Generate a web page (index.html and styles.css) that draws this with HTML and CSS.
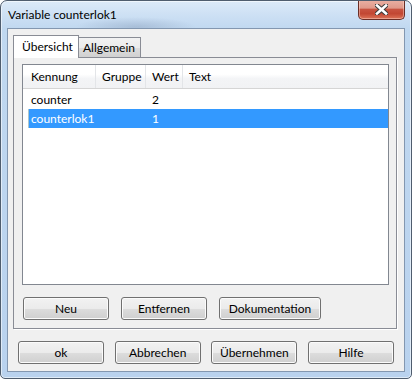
FILE: index.html
```html
<!DOCTYPE html>
<html lang="de">
<head>
<meta charset="utf-8">
<title>Variable counterlok1</title>
<link rel="stylesheet" href="styles.css">
</head>
<body>
<div class="window">
  <div class="titlebar">
    <span class="title">Variable counterlok1</span>
    <div class="close">
      <svg width="13" height="11" viewBox="0 0 13 11">
        <path d="M2 1.5 L11 9.5 M11 1.5 L2 9.5" stroke="#3b3b3b" stroke-width="4.6" stroke-linecap="square" fill="none"/>
        <path d="M2 1.5 L11 9.5 M11 1.5 L2 9.5" stroke="#ffffff" stroke-width="2.6" stroke-linecap="square" fill="none"/>
      </svg>
    </div>
  </div>
  <div class="client">
    <div class="tabs">
      <div class="tab active">Übersicht</div>
      <div class="tab">Allgemein</div>
    </div>
    <div class="panel">
      <div class="list">
        <div class="list-header">
          <div class="hcell">Kennung</div>
          <div class="hcell">Gruppe</div>
          <div class="hcell">Wert</div>
          <div class="hcell last">Text</div>
        </div>
        <div class="list-body">
          <div class="row">
            <div class="cell first">counter</div>
            <div class="cell"></div>
            <div class="cell">2</div>
            <div class="cell"></div>
          </div>
          <div class="row selected">
            <div class="cell first">counterlok1</div>
            <div class="cell"></div>
            <div class="cell">1</div>
            <div class="cell"></div>
          </div>
        </div>
      </div>
      <div class="panel-buttons">
        <button class="btn">Neu</button>
        <button class="btn">Entfernen</button>
        <button class="btn wide">Dokumentation</button>
      </div>
    </div>
    <div class="dialog-buttons">
      <button class="btn">ok</button>
      <button class="btn">Abbrechen</button>
      <button class="btn">Übernehmen</button>
      <button class="btn">Hilfe</button>
    </div>
  </div>
</div>
</body>
</html>
```

FILE: styles.css
```css
html, body {
  margin: 0;
  padding: 0;
  background: #ffffff;
}

body {
  font-family: "Lato", "Open Sans", sans-serif;
  font-size: 12px;
  color: #000000;
}

.window {
  box-sizing: border-box;
  width: 412px;
  height: 379px;
  border: 1px solid #4f5d6e;
  border-radius: 7px 7px 5px 5px;
  padding: 0 6px 6px 6px;
  display: flex;
  flex-direction: column;
  background:
    radial-gradient(ellipse 60px 10px at 135px 26px, rgba(120, 140, 170, 0.35), rgba(120, 140, 170, 0)),
    linear-gradient(180deg, #dceaf8 0px, #cde0f4 14px, #c0d8f0 28px, #b9d2ee 100%);
  box-shadow: inset 0 0 0 1px rgba(255, 255, 255, 0.55);
  overflow: hidden;
}

.titlebar {
  height: 27px;
  display: flex;
  align-items: flex-start;
  flex: 0 0 auto;
}

.title {
  margin-top: 6px;
  padding-left: 1px;
  line-height: 16px;
  color: #000000;
}

.close {
  margin-left: auto;
  margin-top: -1px;
  box-sizing: border-box;
  width: 47px;
  height: 20px;
  border: 1px solid #6a2e26;
  border-top: none;
  border-radius: 0 0 5px 5px;
  background: linear-gradient(180deg, #eab1a4 0%, #e0998a 42%, #c85340 50%, #c24733 72%, #dd7458 100%);
  box-shadow: inset 0 0 0 1px rgba(255, 220, 210, 0.45);
  display: flex;
  align-items: center;
  justify-content: center;
}

.close svg {
  display: block;
}

.client {
  flex: 1 1 auto;
  border: 1px solid #8397b0;
  background: #f0f0f0;
  display: flex;
  flex-direction: column;
}

.tabs {
  display: flex;
  align-items: flex-end;
  height: 23px;
  margin: 6px 0 -1px 5px;
}

.tab {
  box-sizing: border-box;
  height: 21px;
  width: 62px;
  border: 1px solid #898c95;
  border-left: none;
  border-bottom: none;
  background: linear-gradient(180deg, #f2f2f2 0%, #ebebeb 50%, #dddddd 51%, #cfcfcf 100%);
  padding-left: 4px;
  line-height: 20px;
}

.tab.active {
  position: relative;
  z-index: 1;
  height: 23px;
  width: 66px;
  border-left: 1px solid #898c95;
  background: #ffffff;
  padding-left: 8px;
  line-height: 21px;
}

.panel {
  box-sizing: border-box;
  height: 272px;
  margin: 0 7px 0 5px;
  border: 1px solid #898c95;
  background: #f0f0f0;
  box-shadow: 1px 1px 0 #ffffff;
  padding: 6px 7px 8px 8px;
  display: flex;
  flex-direction: column;
}

.list {
  box-sizing: border-box;
  height: 221px;
  border: 1px solid #828790;
  background: #ffffff;
}

.list-header {
  display: grid;
  grid-template-columns: 73px 50px 37px 1fr;
  height: 24px;
  box-sizing: border-box;
  border-bottom: 1px solid #d5d5d5;
  background: linear-gradient(180deg, #ffffff 0%, #ffffff 40%, #f3f4f6 60%, #f1f2f4 100%);
}

.hcell {
  box-sizing: border-box;
  border-right: 1px solid #e3e5e8;
  padding-left: 6px;
  padding-top: 1px;
  line-height: 22px;
}

.hcell:first-child {
  padding-left: 8px;
}

.hcell.last {
  border-right: none;
}

.list-body {
  padding-top: 1px;
}

.row {
  display: grid;
  grid-template-columns: 67px 50px 37px 1fr;
  height: 19px;
  margin-left: 5px;
  line-height: 19px;
}

.cell {
  padding-left: 7px;
}

.cell.first {
  padding-left: 3px;
}

.row.selected {
  background: #3399ff;
  color: #ffffff;
  box-shadow: inset 1px 0 0 0 rgba(255, 230, 170, 0.6);
}

.panel-buttons {
  display: flex;
  gap: 12px;
  margin-top: 12px;
  padding-left: 1px;
}

.btn {
  box-sizing: border-box;
  width: 86px;
  height: 23px;
  margin: 0;
  padding: 0;
  border: 1px solid #707070;
  border-radius: 3px;
  background: linear-gradient(180deg, #f2f2f2 0%, #ebebeb 50%, #dddddd 51%, #cfcfcf 100%);
  box-shadow: inset 0 0 0 1px #fbfbfb;
  font-family: "Lato", "Open Sans", sans-serif;
  font-size: 12px;
  color: #000000;
  line-height: 20px;
  text-align: center;
}

.btn.wide {
  width: 102px;
}

.dialog-buttons {
  display: flex;
  justify-content: space-between;
  margin-top: 12px;
  padding: 0 10px;
}
```
